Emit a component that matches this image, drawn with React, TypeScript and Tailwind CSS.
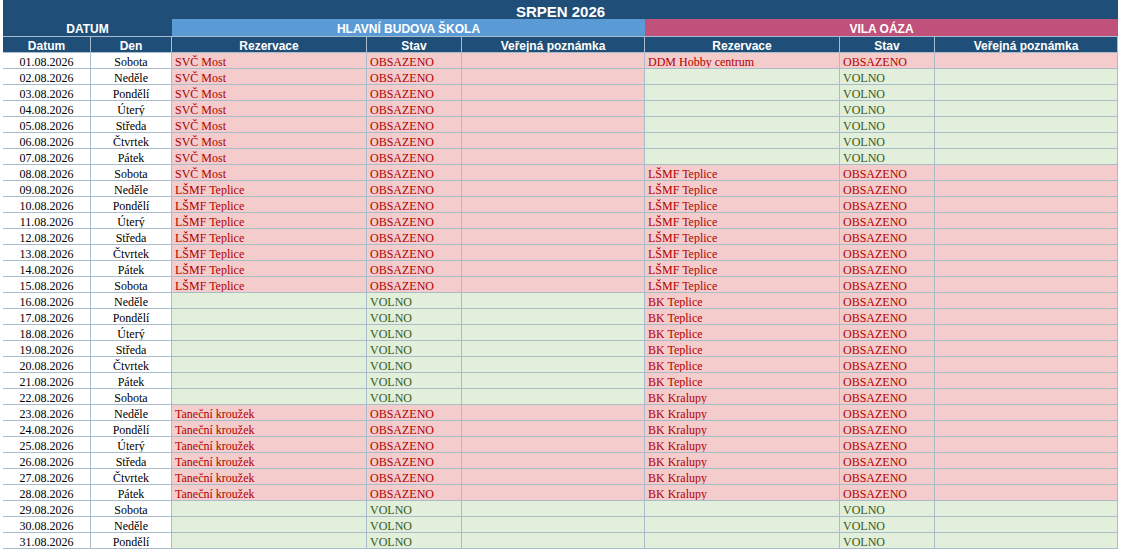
import { Fragment } from "react";

const DAYS = ["Sobota", "Neděle", "Pondělí", "Úterý", "Středa", "Čtvrtek", "Pátek"];

// who has the main school building booked on a given day of August
function hlavni(d: number): string | null {
  if (d <= 8) return "SVČ Most";
  if (d <= 15) return "LŠMF Teplice";
  if (d <= 22) return null;
  if (d <= 28) return "Taneční kroužek";
  return null;
}

function vila(d: number): string | null {
  if (d === 1) return "DDM Hobby centrum";
  if (d <= 7) return null;
  if (d <= 15) return "LŠMF Teplice";
  if (d <= 21) return "BK Teplice";
  if (d <= 28) return "BK Kralupy";
  return null;
}

const rows = Array.from({ length: 31 }, (_, i) => {
  const d = i + 1;
  return {
    date: `${String(d).padStart(2, "0")}.08.2026`,
    day: DAYS[i % 7],
    hlavni: hlavni(d),
    vila: vila(d),
  };
});

const sans = { fontFamily: '"Liberation Sans", Arial, sans-serif' };
const cell = "border-r border-b border-[#a9bccb] overflow-hidden whitespace-nowrap leading-[19px]";
const head =
  "border-r border-y border-[#a9bccb] bg-[#1f4e78] text-white font-bold text-[12px] text-center leading-[18px] overflow-hidden whitespace-nowrap";

function Booking({ name }: { name: string | null }) {
  const fill = name ? "bg-[#f4cccc] text-[#b00000]" : "bg-[#e2efda] text-[#385723]";
  return (
    <>
      <div className={`${cell} ${fill} pl-[3px]`}>{name}</div>
      <div className={`${cell} ${fill} pl-[3px]`}>{name ? "OBSAZENO" : "VOLNO"}</div>
      <div className={`${cell} ${fill}`} />
    </>
  );
}

export default function App() {
  return (
    <div className="w-[1122px] h-[550px] bg-white overflow-hidden pl-[3px]">
      <div
        className="grid grid-cols-[88px_81px_195px_95px_183px_195px_95px_183px] grid-rows-[19px_17px_17px_repeat(31,16px)] text-[12px] text-black"
        style={{ fontFamily: '"Liberation Serif", "Times New Roman", serif' }}
      >
        <div
          className="col-span-8 bg-[#1f4e78] text-white font-bold text-[15px] text-center leading-[24px]"
          style={sans}
        >
          SRPEN 2026
        </div>
        <div className="col-span-2 bg-[#1f4e78] text-white font-bold text-[12px] text-center leading-[20px]" style={sans}>
          DATUM
        </div>
        <div className="col-span-3 bg-[#5b9bd5] text-white font-bold text-[12px] text-center leading-[20px]" style={sans}>
          HLAVNÍ BUDOVA ŠKOLA
        </div>
        <div className="col-span-3 bg-[#c0517a] text-white font-bold text-[12px] text-center leading-[20px]" style={sans}>
          VILA OÁZA
        </div>
        {["Datum", "Den", "Rezervace", "Stav", "Veřejná poznámka", "Rezervace", "Stav", "Veřejná poznámka"].map(
          (h, i) => (
            <div key={i} className={head} style={sans}>
              {h}
            </div>
          )
        )}
        {rows.map((r) => (
          <Fragment key={r.date}>
            <div className={`${cell} bg-white text-center`}>{r.date}</div>
            <div className={`${cell} bg-white text-center`}>{r.day}</div>
            <Booking name={r.hlavni} />
            <Booking name={r.vila} />
          </Fragment>
        ))}
      </div>
    </div>
  );
}
